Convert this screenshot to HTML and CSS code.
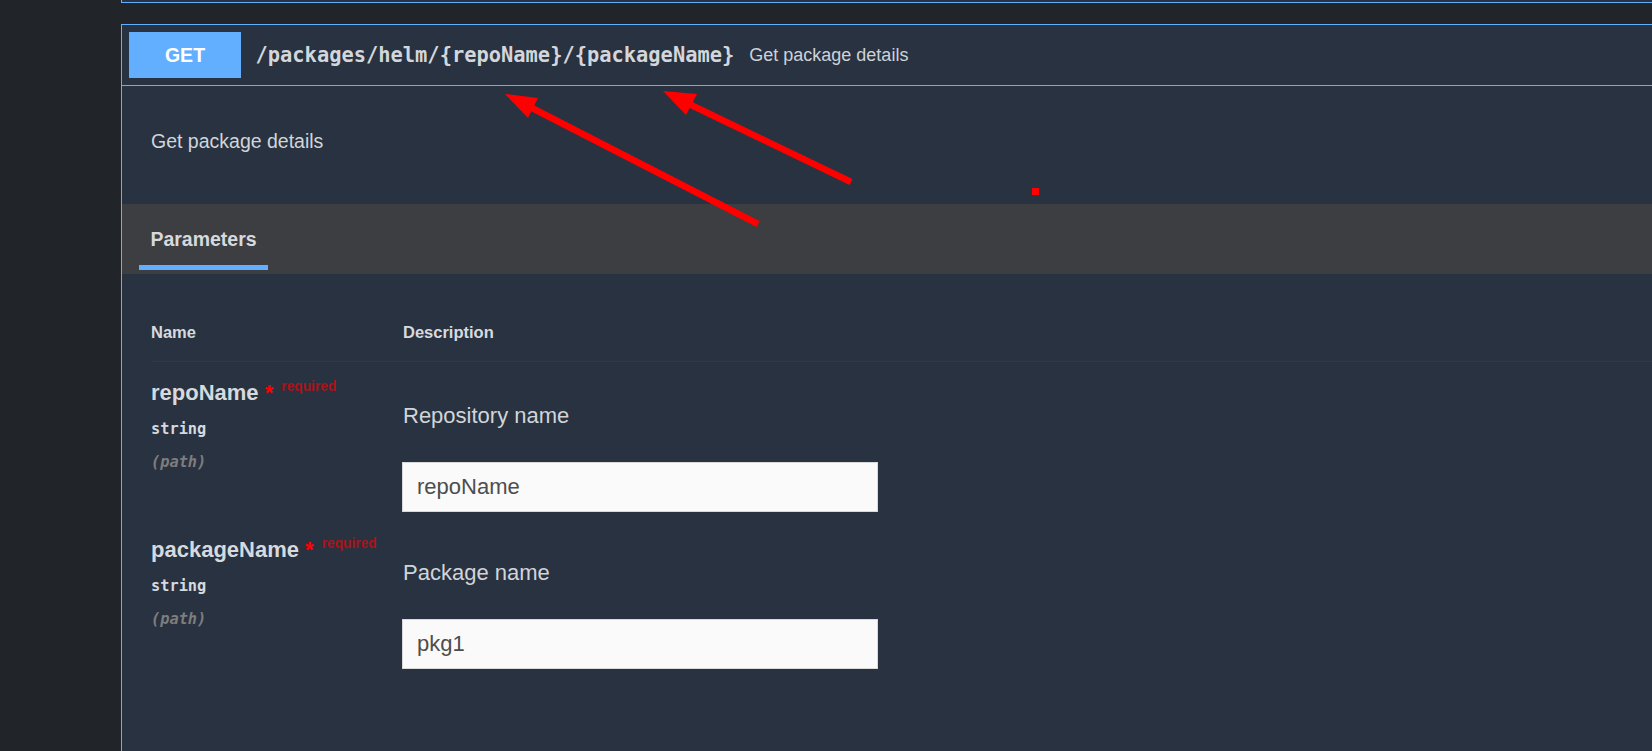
FILE: index.html
```html
<!DOCTYPE html>
<html lang="en">
<head>
<meta charset="utf-8">
<title>Get package details</title>
<link rel="stylesheet" href="styles.css">
</head>
<body>
<div class="main">
  <div class="prev-block"></div>
  <div class="opblock">
    <div class="summary">
      <span class="method">GET</span>
      <span class="path">/packages/helm/{repoName}/{packageName}</span>
      <span class="summary-desc">Get package details</span>
    </div>
    <div class="description">
      <p class="description-text">Get package details</p>
    </div>
    <div class="section-header">
      <div class="tab">
        <h4 class="tab-title">Parameters</h4>
        <div class="tab-bar"></div>
      </div>
    </div>
    <div class="params">
      <div class="params-head">
        <div class="head-cell">Name</div>
        <div class="head-cell">Description</div>
      </div>
      <div class="param-row">
        <div class="param-name-col">
          <div class="param-name">repoName<span class="star">&nbsp;*</span><span class="req">required</span></div>
          <div class="param-type">string</div>
          <div class="param-in">(path)</div>
        </div>
        <div class="param-desc-col">
          <p class="param-desc">Repository name</p>
          <input class="param-input" type="text" value="repoName">
        </div>
      </div>
      <div class="param-row">
        <div class="param-name-col">
          <div class="param-name">packageName<span class="star">&nbsp;*</span><span class="req">required</span></div>
          <div class="param-type">string</div>
          <div class="param-in">(path)</div>
        </div>
        <div class="param-desc-col">
          <p class="param-desc">Package name</p>
          <input class="param-input" type="text" value="pkg1">
        </div>
      </div>
    </div>
  </div>
</div>
<svg class="annotations" width="1652" height="751" viewBox="0 0 1652 751" aria-hidden="true">
  <line x1="530" y1="107" x2="758" y2="224" stroke="#ff0000" stroke-width="6.5"/>
  <polygon points="505,94 538,98 528,118" fill="#ff0000"/>
  <line x1="689" y1="104" x2="851" y2="182" stroke="#ff0000" stroke-width="6.5"/>
  <polygon points="663,91 697,94 686,115" fill="#ff0000"/>
  <rect x="1032" y="188" width="7" height="7" fill="#ff0000"/>
</svg>
</body>
</html>
```

FILE: styles.css
```css
html, body {
  margin: 0;
  padding: 0;
  height: 100%;
}

body {
  background: #212428;
  overflow: hidden;
  font-family: "Liberation Sans", Arial, sans-serif;
  color: #d1d5da;
}

.main {
  margin-left: 121px;
}

.prev-block {
  height: 2px;
  background: #293240;
  border-left: 1px solid #61affe;
  border-bottom: 1px solid #61affe;
}

.opblock {
  margin-top: 21px;
  background: #293240;
  border: 1px solid #61affe;
  border-right: none;
  border-bottom: none;
  padding-bottom: 120px;
}

.summary {
  display: flex;
  align-items: center;
  padding: 7px;
  border-bottom: 1px solid #61affe;
}

.method {
  display: flex;
  align-items: center;
  justify-content: center;
  width: 112px;
  height: 46px;
  background: #61affe;
  color: #ffffff;
  font-weight: bold;
  font-size: 19.5px;
}

.path {
  padding: 0 15px 0 14.5px;
  font-family: "DejaVu Sans Mono", monospace;
  font-weight: bold;
  font-size: 20.4px;
  color: #d3d7dc;
}

.summary-desc {
  font-size: 18px;
  color: #cdd2d8;
}

.description {
  padding: 43px 29px 51px;
}

.description-text {
  margin: 0;
  font-size: 19.5px;
  line-height: 24px;
  color: #d1d5da;
}

.section-header {
  background: #3d3e42;
  padding: 23px 0 4px 17px;
}

.tab {
  display: flex;
  flex-direction: column;
  align-items: center;
  width: 129px;
}

.tab-title {
  margin: 0;
  font-size: 19.5px;
  line-height: 24px;
  font-weight: bold;
  color: #d6dadf;
}

.tab-bar {
  margin-top: 14px;
  width: 100%;
  height: 5px;
  background: #61affe;
}

.params {
  padding-left: 29px;
}

.params-head {
  display: grid;
  grid-template-columns: 252px 1fr;
  padding: 48px 0 19px;
  border-bottom: 1px solid #303845;
}

.head-cell {
  font-size: 16.5px;
  line-height: 20px;
  font-weight: bold;
  color: #d6dadf;
}

.param-row {
  display: grid;
  grid-template-columns: 252px 1fr;
}

.param-name-col {
  padding-top: 18px;
}

.param-name {
  font-size: 22px;
  line-height: 26px;
  font-weight: bold;
  color: #d6dadf;
}

.star {
  color: #ff0000;
}

.req {
  margin-left: 8px;
  font-size: 13.75px;
  line-height: 0;
  vertical-align: 9px;
  color: #a9141a;
}

.param-type {
  margin-top: 13px;
  font-family: "DejaVu Sans Mono", monospace;
  font-weight: bold;
  font-size: 15.3px;
  line-height: 20px;
  color: #d6dadf;
}

.param-in {
  margin-top: 13px;
  font-family: "DejaVu Sans Mono", monospace;
  font-weight: bold;
  font-style: italic;
  font-size: 15.3px;
  line-height: 20px;
  color: #7d7d7d;
}

.param-desc-col {
  padding: 41px 0 7px;
}

.param-desc {
  margin: 0 0 33px;
  font-size: 22px;
  line-height: 26px;
  color: #d1d5da;
}

.param-input {
  display: block;
  box-sizing: border-box;
  width: 476px;
  height: 50px;
  margin: 0 0 0 -1px;
  padding: 0 14px;
  border: 1px solid #d9d9d9;
  border-radius: 0;
  background: #fafafa;
  font-family: "Liberation Sans", Arial, sans-serif;
  font-size: 22px;
  color: #4d4d4d;
  outline: none;
}

.annotations {
  position: absolute;
  top: 0;
  left: 0;
  pointer-events: none;
}
```
